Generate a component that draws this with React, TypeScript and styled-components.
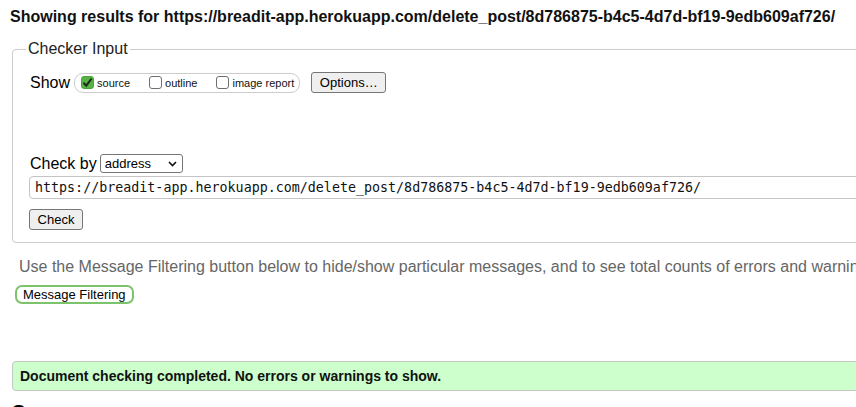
import styled, { createGlobalStyle } from "styled-components";

const GlobalStyle = createGlobalStyle`
    body {
        margin: 0;
        background: #fff;
        font-family: "Liberation Sans", Arial, sans-serif;
        color: #000;
        overflow: hidden;
    }
`;

const Page = styled.div`
    width: 1100px;
    padding-left: 10px;
`;

const Heading = styled.h2`
    margin: 7px 0 0;
    font-size: 16px;
    line-height: 20px;
    font-weight: bold;
    color: #111;
    white-space: nowrap;
`;

const Fieldset = styled.fieldset`
    margin: 13px 0 0 2px;
    width: 1000px;
    padding: 14px 17px 12px 17px;
    border: 1px solid #ccc;
    border-radius: 4px;
`;

const Legend = styled.legend`
    margin-left: -4px;
    padding: 0 2px;
    font-size: 16px;
    line-height: 18px;
    color: #222;
`;

const Row = styled.div<{ $top?: number }>`
    display: flex;
    align-items: center;
    margin-top: ${(p) => p.$top ?? 0}px;
    font-size: 16px;
`;

const Pill = styled.div`
    display: flex;
    align-items: center;
    height: 18px;
    margin-left: 4px;
    padding: 0 5px 0 6px;
    border: 1px solid #ccc;
    border-radius: 9px;
`;

const Option = styled.label`
    display: flex;
    align-items: center;
    font-size: 11px;
    color: #111;
    & + & {
        margin-left: 19px;
    }
`;

const Box = styled.span<{ $checked?: boolean }>`
    display: inline-flex;
    align-items: center;
    justify-content: center;
    box-sizing: border-box;
    width: 13px;
    height: 13px;
    margin-right: 3px;
    border-radius: 3px;
    border: 1px solid ${(p) => (p.$checked ? "#4aa43c" : "#6f6f6f")};
    background: ${(p) => (p.$checked ? "#58b347" : "#fff")};
`;

const Button = styled.button`
    box-sizing: border-box;
    height: 21px;
    padding: 0 7px;
    font-family: "Liberation Sans", Arial, sans-serif;
    font-size: 13px;
    color: #000;
    background: #efefef;
    border: 1px solid #767676;
    border-radius: 3px;
`;

const OptionsButton = styled(Button)`
    margin-left: 11px;
    width: 75px;
`;

const Select = styled.div`
    display: flex;
    align-items: center;
    justify-content: space-between;
    box-sizing: border-box;
    width: 83px;
    height: 19px;
    margin-left: 3px;
    padding: 0 5px 0 4px;
    border: 1px solid #767676;
    border-radius: 3px;
    font-size: 13px;
`;

const UrlInput = styled.div`
    box-sizing: border-box;
    height: 23px;
    margin: 3px 0 0 -1px;
    padding: 0 5px;
    display: flex;
    align-items: center;
    border: 1px solid #c4c4c4;
    border-radius: 4px;
    font-family: "DejaVu Sans Mono", Menlo, monospace;
    font-size: 13.33px;
    color: #111;
    white-space: nowrap;
`;

const CheckButton = styled(Button)`
    display: block;
    margin: 10px 0 0 -1px;
    width: 54px;
`;

const Hint = styled.p`
    margin: 15px 0 0 9px;
    font-size: 16px;
    line-height: 18px;
    color: #666;
    white-space: nowrap;
`;

const FilterButton = styled.button`
    display: block;
    box-sizing: border-box;
    height: 19px;
    margin: 9px 0 0 5px;
    padding: 0 6px;
    font-family: "Liberation Sans", Arial, sans-serif;
    font-size: 13px;
    color: #000;
    background: #fff;
    border: 2px solid #7cc46c;
    border-radius: 7px;
`;

const Success = styled.div`
    box-sizing: border-box;
    width: 1000px;
    height: 30px;
    margin: 57px 0 0 2px;
    padding-left: 7px;
    display: flex;
    align-items: center;
    background: #ccffcc;
    border: 1px solid #c6c6c6;
    border-radius: 4px;
    font-size: 14px;
    font-weight: bold;
    color: #111;
`;

const SourceTitle = styled.h2`
    margin: 9px 0 0 2px;
    font-size: 20px;
    line-height: 24px;
    font-weight: bold;
`;

function Check() {
    return (
        <svg width="11" height="11" viewBox="0 0 11 11">
            <path d="M1.5 5.8 L4.2 8.6 L9.6 1.6" fill="none" stroke="#1d2a1a" strokeWidth="2" />
        </svg>
    );
}

function Chevron() {
    return (
        <svg width="9" height="6" viewBox="0 0 9 6">
            <path d="M1 1 L4.5 4.5 L8 1" fill="none" stroke="#111" strokeWidth="1.6" />
        </svg>
    );
}

const url = "https://breadit-app.herokuapp.com/delete_post/8d786875-b4c5-4d7d-bf19-9edb609af726/";

export default function App() {
    return (
        <Page>
            <GlobalStyle />
            <Heading>Showing results for {url}</Heading>
            <Fieldset>
                <Legend>Checker Input</Legend>
                <Row>
                    Show
                    <Pill>
                        <Option>
                            <Box $checked>
                                <Check />
                            </Box>
                            source
                        </Option>
                        <Option>
                            <Box />
                            outline
                        </Option>
                        <Option>
                            <Box />
                            image report
                        </Option>
                    </Pill>
                    <OptionsButton>Options…</OptionsButton>
                </Row>
                <Row $top={61}>
                    Check by
                    <Select>
                        address
                        <Chevron />
                    </Select>
                </Row>
                <UrlInput>{url}</UrlInput>
                <CheckButton>Check</CheckButton>
            </Fieldset>
            <Hint>
                Use the Message Filtering button below to hide/show particular messages, and to see total counts of
                errors and warnings.
            </Hint>
            <FilterButton>Message Filtering</FilterButton>
            <Success>Document checking completed. No errors or warnings to show.</Success>
            <SourceTitle>Source</SourceTitle>
        </Page>
    );
}
